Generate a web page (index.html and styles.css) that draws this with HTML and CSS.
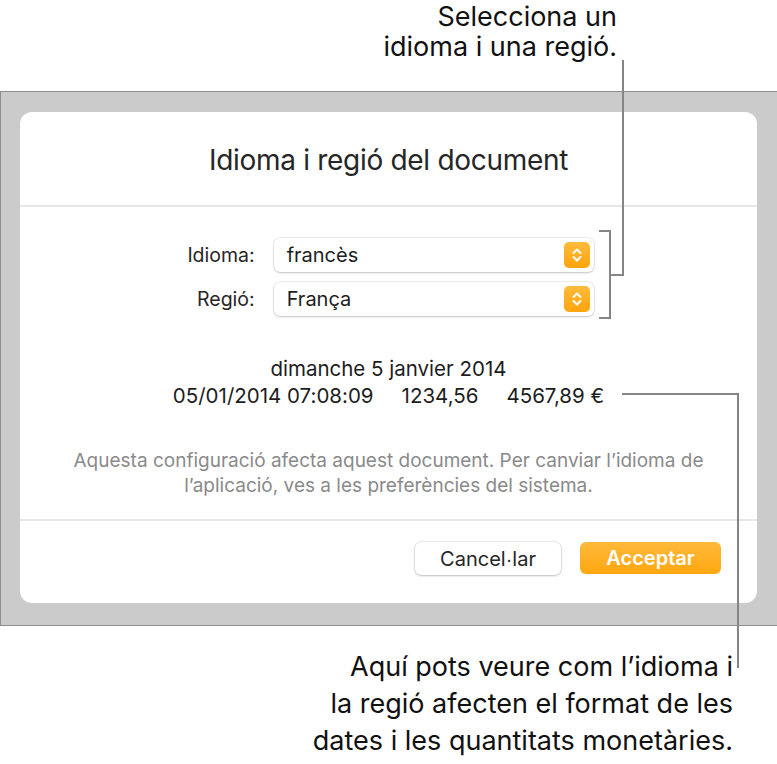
FILE: index.html
```html
<!DOCTYPE html>
<html lang="ca">
<head>
<meta charset="utf-8">
<title>Idioma i regió del document</title>
<link rel="stylesheet" href="styles.css">
</head>
<body>
<div class="page">
  <div class="callout callout-top">Selecciona un<br>idioma i una regió.</div>

  <div class="frame">
    <div class="dialog">
      <div class="dlg-head">Idioma i regió del document</div>
      <div class="dlg-body">
        <div class="form">
          <label class="lbl">Idioma:</label>
          <div class="popup"><span class="popup-text">francès</span>
            <svg class="stepper" viewBox="0 0 26 26" width="26" height="26"><defs><linearGradient id="g1" x1="0" y1="0" x2="0" y2="1"><stop offset="0" stop-color="#ffbb3d"/><stop offset="1" stop-color="#ffa40c"/></linearGradient></defs><rect width="26" height="26" rx="5" fill="url(#g1)"/><path d="M9.5 11 L13 7.5 L16.5 11 M9.5 15 L13 18.5 L16.5 15" fill="none" stroke="#fff" stroke-width="2" stroke-linecap="round" stroke-linejoin="round"/></svg>
          </div>
          <label class="lbl">Regió:</label>
          <div class="popup"><span class="popup-text">França</span>
            <svg class="stepper" viewBox="0 0 26 26" width="26" height="26"><rect width="26" height="26" rx="5" fill="url(#g1)"/><path d="M9.5 11 L13 7.5 L16.5 11 M9.5 15 L13 18.5 L16.5 15" fill="none" stroke="#fff" stroke-width="2" stroke-linecap="round" stroke-linejoin="round"/></svg>
          </div>
        </div>
        <div class="sample">
          <div>dimanche 5 janvier 2014</div>
          <div>05/01/2014 07:08:09<span class="gap">1234,56</span><span class="gap">4567,89 €</span></div>
        </div>
        <div class="note">Aquesta configuració afecta aquest document. Per canviar l’idioma de<br>l’aplicació, ves a les preferències del sistema.</div>
      </div>
      <div class="dlg-foot">
        <button class="btn btn-cancel">Cancel<span class="middot">·</span>lar</button>
        <button class="btn btn-ok">Acceptar</button>
      </div>
    </div>
  </div>

  <div class="callout callout-bottom">Aquí pots veure com l’idioma i<br>la regió afecten el format de les<br>dates i les quantitats monetàries.</div>

  <svg class="leaders" width="777" height="764" viewBox="0 0 777 764">
    <path d="M623 60 V275 H610 M599 231 H610 V318 H599" fill="none" stroke="#858585" stroke-width="2"/>
    <path d="M622 394 H738 V668" fill="none" stroke="#858585" stroke-width="2"/>
  </svg>
</div>
</body>
</html>
```

FILE: styles.css
```css
html, body {
  margin: 0;
  padding: 0;
  background: #ffffff;
}
body {
  font-family: Inter, "Noto Sans", "Liberation Sans", sans-serif;
  font-feature-settings: "calt" 0, "liga" 0;
  color: #000;
}
.page {
  position: relative;
  width: 777px;
  height: 764px;
  overflow: hidden;
}
.callout {
  text-align: right;
  color: #111;
  font-size: 27px;
}
.callout-top {
  height: 91px;
  box-sizing: border-box;
  padding-top: 2px;
  padding-right: 160px;
  line-height: 30px;
}
.frame {
  background: #cbcbcb;
  border-top: 1px solid #8e8e8e;
  border-left: 1px solid #8e8e8e;
  border-bottom: 1px solid #8e8e8e;
  padding: 20px 20px 22px 19px;
}
.dialog {
  height: 491px;
  background: #fff;
  border-radius: 12px;
  display: flex;
  flex-direction: column;
}
.dlg-head {
  height: 95px;
  padding-top: 2px;
  box-sizing: border-box;
  border-bottom: 2px solid #e7e7e7;
  display: flex;
  align-items: center;
  justify-content: center;
  font-size: 28px;
  color: #262626;
  letter-spacing: -0.3px;
}
.dlg-body {
  height: 312px;
  box-sizing: border-box;
  padding-top: 31px;
  color: #262626;
}
.form {
  display: grid;
  grid-template-columns: auto 320px;
  justify-content: center;
  column-gap: 19px;
  row-gap: 10px;
  align-items: center;
  padding-left: 4px;
}
.lbl {
  text-align: right;
  font-size: 19.5px;
}
.popup {
  height: 34px;
  background: #fff;
  border-radius: 6px;
  box-shadow: 0 0 0 0.5px rgba(0,0,0,0.12), 0 1px 2.5px rgba(0,0,0,0.18);
  display: flex;
  align-items: center;
  justify-content: space-between;
  padding: 0 4px 0 13px;
}
.popup-text {
  font-size: 20px;
  color: #1d1d1d;
}
.stepper {
  display: block;
}
.sample {
  margin-top: 39px;
  text-align: center;
  font-size: 20.5px;
  line-height: 27px;
  color: #1d1d1d;
}
.gap {
  margin-left: 28px;
}
.note {
  margin-top: 39px;
  text-align: center;
  font-size: 19px;
  line-height: 25px;
  color: #8a8a8a;
}
.dlg-foot {
  flex: 1;
  border-top: 2px solid #e7e7e7;
  display: flex;
  justify-content: flex-end;
  align-items: flex-start;
  padding: 21px 36px 0 0;
  gap: 19px;
}
.btn {
  font-family: inherit;
  font-feature-settings: "calt" 0, "liga" 0;
  font-size: 20px;
  border: none;
  border-radius: 6px;
  height: 33px;
  padding: 0;
  margin: 0;
}
.middot {
  font-family: "Liberation Sans", sans-serif;
}
.btn-cancel {
  width: 146px;
  background: #fff;
  color: #262626;
  box-shadow: 0 0 0 0.5px rgba(0,0,0,0.14), 0 1px 2.5px rgba(0,0,0,0.2);
}
.btn-ok {
  width: 141px;
  height: 32px;
  background: linear-gradient(#ffb93a, #ffa710);
  color: #fff;
  font-weight: 600;
}
.callout-bottom {
  margin-top: 22px;
  padding-right: 44px;
  line-height: 37px;
}
.leaders {
  position: absolute;
  top: 0;
  left: 0;
  pointer-events: none;
}
```
